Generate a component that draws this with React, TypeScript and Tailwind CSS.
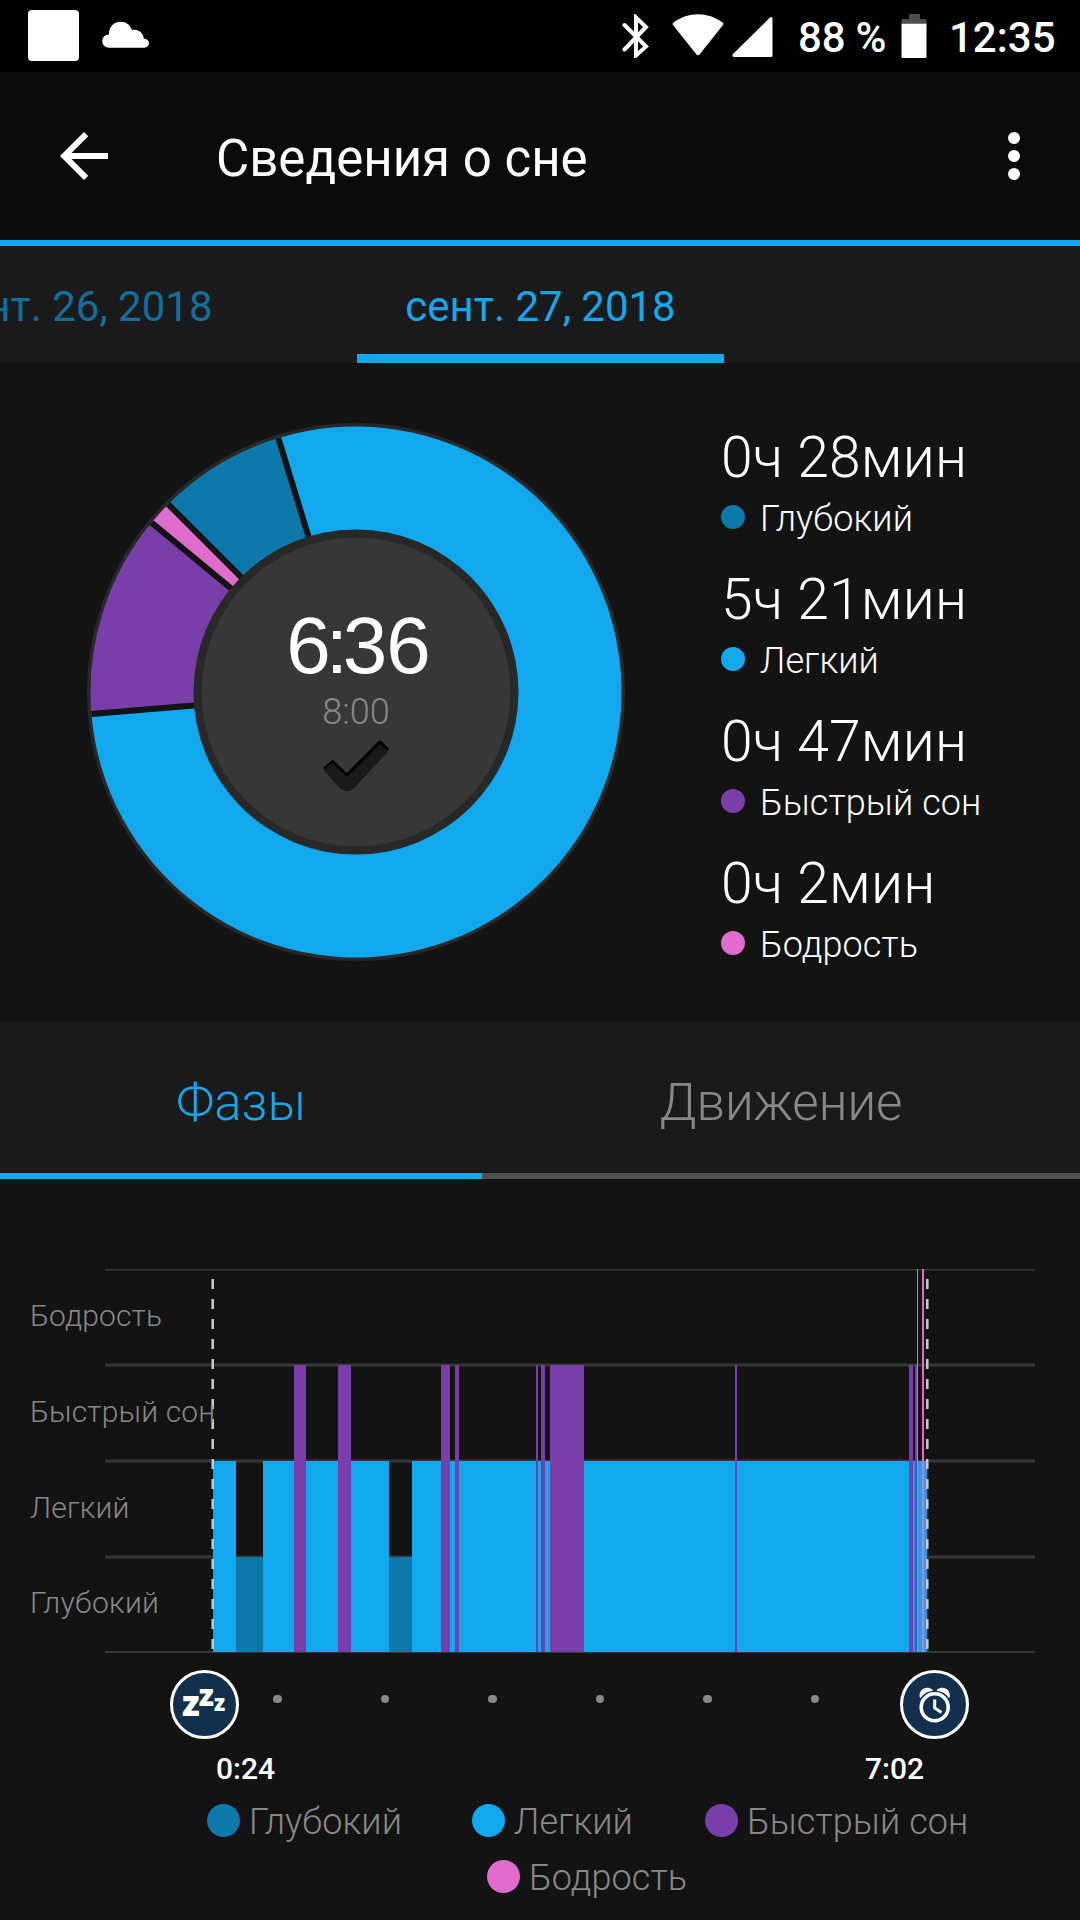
import React from "react";

type Phase = "deep" | "light" | "rem" | "awake";

const FILL: Record<Phase, string> = {
  deep: "#0d79ab",
  light: "#11a8ee",
  rem: "#793eaa",
  awake: "#e06dcd",
};

const DOT: Record<Phase, string> = {
  deep: "bg-[#0d79ab]",
  light: "bg-[#11a8ee]",
  rem: "bg-[#793eaa]",
  awake: "bg-[#e06dcd]",
};

const LABEL: Record<Phase, string> = {
  deep: "Глубокий",
  light: "Легкий",
  rem: "Быстрый сон",
  awake: "Бодрость",
};

function StatusBar() {
  return (
    <div className="flex h-[72px] shrink-0 items-start bg-black">
      <div className="ml-7 mt-2.5 h-[51px] w-[51px] rounded-[4px] bg-white" />
      <svg className="ml-[23px] mt-[21px]" width="48" height="27" viewBox="0 0 49 27" fill="#fff">
        <path d="M7 27a6.8 6.8 0 0 1 0-13.6C7 6 12 .5 19 .5c5.500 0 10 3.300 11.600 8.500C37 7.600 42 11.500 42.600 17.500 46 17.800 48 19.700 48 22.300 48 25 46 27 43 27z" />
      </svg>
      <div className="flex-1" />
      <svg className="mt-[14px]" width="29" height="44" viewBox="0 0 29 44" fill="none" stroke="#fff" strokeWidth="4" strokeLinecap="round" strokeLinejoin="miter">
        <path d="M3.500 11L25 32.500 15 41.500V3.500L25 13 3.500 35.500" />
      </svg>
      <svg className="ml-[22px] mt-[14px]" width="52" height="42" viewBox="0 0 52 42" fill="#fff">
        <path d="M1 11Q0 9.500 1.500 8.500C16-2.500 36-2.500 50.500 8.500Q52 9.500 51 11L27.500 40.500Q26 42 24.500 40.500z" />
      </svg>
      <svg className="ml-[8px] mt-[16px]" width="41" height="41" viewBox="0 0 41 41" fill="#fff">
        <path d="M1 38L38 1.500Q40.500 0 40.500 3V39.500Q40.500 41 39 41H2Q-.5 40.500 1 38z" />
      </svg>
      <span className="ml-[25px] mt-[14px] w-[92px] whitespace-nowrap text-[42px] font-medium leading-[48px] tracking-[-0.2px] text-white">88 %</span>
      <svg className="ml-[11px] mt-[14px]" width="26" height="44" viewBox="0 0 26 44">
        <path d="M8 0h11v5h5q1.500 0 1.500 1.500V11H.5V6.500Q.5 5 2 5h6z" fill="#4d4d4d" />
        <path d="M.5 9.700h25V42.500q0 1.500-1.500 1.500H2Q.5 44 .5 42.500z" fill="#fff" />
      </svg>
      <span className="ml-[22px] mt-[14px] w-[131px] whitespace-nowrap text-[42px] font-medium leading-[48px] text-white">12:35</span>
    </div>
  );
}

function Header() {
  return (
    <header className="flex h-[174px] shrink-0 items-start border-b-6 border-[#11a8ee] bg-[#0b0b0b]">
      <svg className="ml-12 mt-12" width="72" height="72" viewBox="0 0 24 24" fill="#fff">
        <path d="M20 11H7.830l5.590-5.590L12 4l-8 8 8 8 1.410-1.410L7.830 13H20v-2z" />
      </svg>
      <h1 className="ml-24 mt-[57px] flex-1 text-[51px] leading-[60px] text-white">Сведения о сне</h1>
      <div className="mr-[60px] mt-[60px] flex flex-col gap-1.5">
        <i className="size-3 rounded-full bg-white" />
        <i className="size-3 rounded-full bg-white" />
        <i className="size-3 rounded-full bg-white" />
      </div>
    </header>
  );
}

function DateTabs() {
  return (
    <nav className="flex h-[117px] shrink-0 overflow-hidden bg-[#1a1a1a] text-[42px] leading-[50px]">
      <div className="flex w-[357px] shrink-0 justify-end pr-[144.500px] pt-9 whitespace-nowrap text-[#136e9b]">сент. 26, 2018</div>
      <div className="w-[367px] border-b-9 border-[#11a8ee] pt-9 text-center whitespace-nowrap text-[#11a8ee]">сент. 27, 2018</div>
    </nav>
  );
}

const CX = 269;
const R = 265.5;
const HUB = 160;

function polar(deg: number, r: number): [number, number] {
  const a = (deg * Math.PI) / 180;
  return [CX + r * Math.sin(a), CX - r * Math.cos(a)];
}

function slice(from: number, to: number) {
  const [x1, y1] = polar(from, R);
  const [x2, y2] = polar(to, R);
  const large = to - from > 180 ? 1 : 0;
  return `M${CX} ${CX}L${x1} ${y1}A${R} ${R} 0 ${large} 1 ${x2} ${y2}Z`;
}

const SLICES: { phase: Phase; from: number; to: number }[] = [
  { phase: "light", from: -17, to: 265.250 },
  { phase: "rem", from: 265.250, to: 309.650 },
  { phase: "awake", from: 309.650, to: 315 },
  { phase: "deep", from: 315, to: 343 },
];

function Donut() {
  return (
    <div className="grid h-[538px] w-[538px] shrink-0 place-items-center *:[grid-area:1/1]">
      <svg width="538" height="538" viewBox="0 0 538 538">
        <circle cx={CX} cy={CX} r="269" fill="#282828" />
        {SLICES.map((s) => (
          <path key={s.phase} d={slice(s.from, s.to)} fill={FILL[s.phase]} />
        ))}
        {SLICES.map((s) => {
          const [x1, y1] = polar(s.from, HUB);
          const [x2, y2] = polar(s.from, R);
          return <line key={s.phase} x1={x1} y1={y1} x2={x2} y2={y2} stroke="#131313" strokeWidth="6" />;
        })}
        <circle cx={CX} cy={CX} r="162.500" fill="#282828" />
        <circle cx={CX} cy={CX} r="154.500" fill="#373737" />
      </svg>
      <div className="flex h-full flex-col items-center pt-[177px]">
        <div className="flex pl-1 font-['Liberation_Sans',sans-serif] text-[80px] leading-[92px] text-white">
          <span className="tracking-[-5px]">6:</span>
          <span className="tracking-[-1px]">36</span>
        </div>
        <div className="-mt-px text-[36px] font-light leading-[42px] text-[#888]">8:00</div>
        <svg className="mt-[7px]" width="66" height="52" viewBox="0 0 66 52">
          <path d="M0 28L8.500 20.500Q9.500 19.500 10.500 20.500L24 33 55.500 1Q57 0 58.500 1L66 9 31 48Q24 54 17 48z" fill="#000" />
          <path d="M.5 30L9.500 23 22 35Q24 37 26 35L57 4 65.500 11 31 48Q24 54 17 48z" fill="#1a1a1a" />
        </svg>
      </div>
    </div>
  );
}

const STATS: { phase: Phase; value: string }[] = [
  { phase: "deep", value: "0ч 28мин" },
  { phase: "light", value: "5ч 21мин" },
  { phase: "rem", value: "0ч 47мин" },
  { phase: "awake", value: "0ч 2мин" },
];

function Summary() {
  return (
    <section className="flex h-[658px] shrink-0 items-start bg-[#131313] pl-[87px] pt-[60px] font-light text-white">
      <Donut />
      <ul className="ml-24 mt-0.5">
        {STATS.map((s) => (
          <li key={s.phase} className="h-[142px]">
            <div className="h-[67px] whitespace-nowrap text-[57px] leading-[66px] tracking-[0.15px]">{s.value}</div>
            <div className="flex h-[50px] items-center">
              <i className={`mr-[15px] size-6 rounded-full ${DOT[s.phase]}`} />
              <span className="pt-1 text-[36px] leading-[42px] tracking-[0.1px]">{LABEL[s.phase]}</span>
            </div>
          </li>
        ))}
      </ul>
    </section>
  );
}

function ViewTabs() {
  return (
    <nav className="flex h-[158px] shrink-0 bg-[#1a1a1a] text-center text-[51px] font-light leading-[60px]">
      <div className="w-[482px] border-b-6 border-[#11a8ee] pt-[52px] text-[#11a8ee]">Фазы</div>
      <div className="flex-1 border-b-6 border-[#505050] pt-[52px] text-[#888]">Движение</div>
    </nav>
  );
}

const BARS: [Phase, number, number][] = [
  ["light", 213, 236],
  ["deep", 236, 263],
  ["light", 263, 389],
  ["deep", 389, 412],
  ["light", 412, 927],
  ["rem", 294, 306],
  ["rem", 338, 351],
  ["rem", 441, 450],
  ["rem", 455, 459],
  ["rem", 536, 538],
  ["rem", 541, 545],
  ["rem", 550, 584],
  ["rem", 735, 737],
  ["rem", 909, 913],
  ["rem", 915, 917],
  ["awake", 917, 918],
  ["awake", 922, 924],
];

const TOP: Record<Phase, number> = { awake: 0, rem: 96, light: 192, deep: 288 };

function Hypnogram() {
  return (
    <div className="grid h-[384px] *:[grid-area:1/1]">
      <svg width="1080" height="384" viewBox="0 0 1080 384" shapeRendering="crispEdges">
        <g fill="#353535">
          <rect x="105" y="0" width="930" height="1" />
          <rect x="105" y="95" width="930" height="2" />
          <rect x="105" y="191" width="930" height="2" />
          <rect x="105" y="287" width="930" height="2" />
          <rect x="105" y="382" width="930" height="2" />
        </g>
        <g fill="#252525">
          <rect x="105" y="1" width="930" height="1" />
          <rect x="105" y="94" width="930" height="1" />
          <rect x="105" y="97" width="930" height="1" />
          <rect x="105" y="190" width="930" height="1" />
          <rect x="105" y="193" width="930" height="1" />
          <rect x="105" y="286" width="930" height="1" />
          <rect x="105" y="289" width="930" height="1" />
        </g>
        {BARS.map(([phase, from, to], i) => (
          <rect key={i} x={from} y={TOP[phase]} width={to - from} height={383 - TOP[phase]} fill={FILL[phase]} />
        ))}
        <g strokeDasharray="10 10">
          <line x1="211.500" x2="211.500" y1="10" y2="380" stroke="#777" />
          <line x1="213" x2="213" y1="10" y2="380" stroke="#c8c8c8" strokeWidth="2" />
          <line x1="927" x2="927" y1="10" y2="380" stroke="#c8c8c8" strokeWidth="2" />
          <line x1="928.500" x2="928.500" y1="10" y2="380" stroke="#777" />
        </g>
      </svg>
      <div className="flex flex-col pl-[30px] pt-[26px] text-[30px] font-light tracking-[0.15px] text-[#888]">
        <span className="h-24 leading-[42px]">{LABEL.awake}</span>
        <span className="h-24 leading-[42px]">{LABEL.rem}</span>
        <span className="h-[95px] leading-[42px]">{LABEL.light}</span>
        <span className="leading-[42px] tracking-[0.3px]">{LABEL.deep}</span>
      </div>
    </div>
  );
}

function TimeAxis() {
  return (
    <div className="mt-[17px]">
      <div className="flex h-[70px] pl-[170px]">
        <div className="flex size-[69px] shrink-0 rounded-full border-3 border-white bg-[#12304d] pl-[9px] font-['Open_Sans',sans-serif] font-extrabold leading-none text-white">
          <span className="pt-[12px] text-[35px]">z</span>
          <span className="-ml-px pt-[7px] text-[30px]">z</span>
          <span className="pt-[18px] text-[22px]">z</span>
        </div>
        <div className="flex w-[606px] shrink-0 justify-between pl-[34px] pr-[26px] pt-[24.500px]">
          {[0, 1, 2, 3, 4, 5].map((i) => (
            <i key={i} className="size-[8.500px] rounded-full bg-[#888]" />
          ))}
        </div>
        <div className="ml-[55px] size-[69px] shrink-0 rounded-full border-3 border-white bg-[#12304d]">
          <svg width="63" height="63" viewBox="0 0 63 63" fill="none" stroke="#fff">
            <circle cx="31.700" cy="34.300" r="13.500" strokeWidth="3.600" />
            <path d="M31.700 26.500V35L38.500 39.500" strokeWidth="3" />
            <path d="M16.700 24.500C15.500 17 22.500 12 29.500 16.500V18C24 18.500 21 20.500 17.500 25zM46.700 24.500C48 17 41 12 34 16.500V18C39.500 18.500 42.500 20.500 46 25z" fill="#fff" stroke="none" />
          </svg>
        </div>
      </div>
      <div className="flex justify-between pl-[216px] pr-[156px] pt-[11px] text-[30px] font-medium leading-[36px] text-white">
        <span>0:24</span>
        <span>7:02</span>
      </div>
    </div>
  );
}

function LegendItem({ phase }: { phase: Phase }) {
  return (
    <div className="flex items-center">
      <i className={`mr-[9px] size-[33px] rounded-full ${DOT[phase]}`} />
      <span className="whitespace-nowrap pt-[3px] text-[36px] leading-[42px] tracking-[0.1px]">{LABEL[phase]}</span>
    </div>
  );
}

function Legend() {
  return (
    <div className="flex flex-col pt-2.5 font-light text-[#888]">
      <div className="flex h-[46px] items-center pl-[207px]">
        <div className="w-[265px]"><LegendItem phase="deep" /></div>
        <div className="w-[233px]"><LegendItem phase="light" /></div>
        <LegendItem phase="rem" />
      </div>
      <div className="mt-[10px] flex h-[46px] items-center pl-[487px]">
        <LegendItem phase="awake" />
      </div>
    </div>
  );
}

export default function App() {
  return (
    <main className="flex h-[1920px] w-[1080px] flex-col overflow-hidden bg-[#131313] font-['Roboto',sans-serif]">
      <StatusBar />
      <Header />
      <DateTabs />
      <Summary />
      <ViewTabs />
      <section className="flex flex-col pt-[90px]">
        <Hypnogram />
        <TimeAxis />
        <Legend />
      </section>
    </main>
  );
}
